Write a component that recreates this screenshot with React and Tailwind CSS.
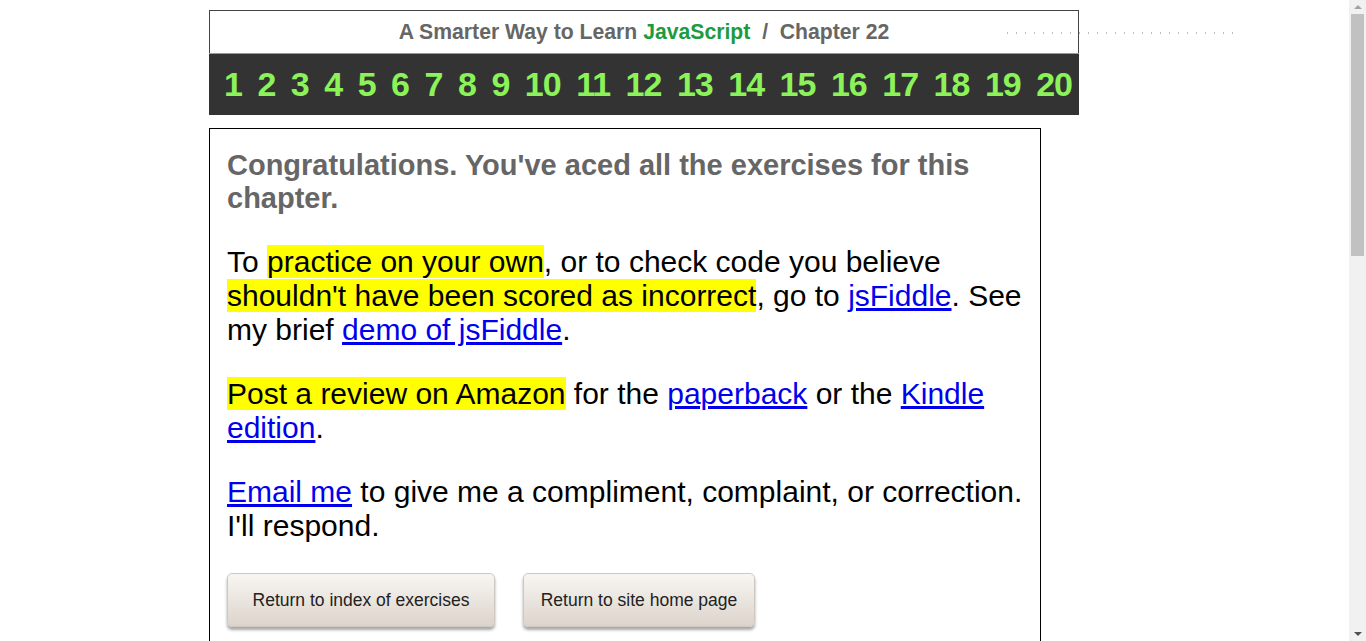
import React from "react";

// Chapter-complete page: banner with chapter numbers, then the congrats box

const chapters = Array.from({ length: 20 }, (_, i) => i + 1);

const Hl = ({ children }) => <span className="bg-[#ffff00]">{children}</span>;

const A = ({ children }) => (
  <a href="#" className="text-[#0000ee] underline">
    {children}
  </a>
);

const Btn = ({ children, w }) => (
  <button
    className={`${w} h-[54px] rounded-[5px] border border-[#cfc8c0] bg-gradient-to-b from-[#f8f6f3] to-[#dcd4cb] shadow-[0_3px_3px_rgba(0,0,0,0.35)] text-[17.5px] text-[#222] font-['Liberation_Sans',sans-serif]`}
  >
    {children}
  </button>
);

export default function App() {
  return (
    <div className="relative min-h-[800px] bg-white font-['Liberation_Sans',Arial,sans-serif]">
      {/* stray dotted rule next to the banner */}
      <svg className="absolute left-[1007px] top-[32px]" width="232" height="2">
        <line x1="0" y1="1" x2="232" y2="1" stroke="#777" strokeDasharray="1 8" />
      </svg>

      {/* window scrollbar */}
      <div className="fixed right-0 top-0 z-10 w-[17px] h-[641px] bg-[#f1f1f1] flex flex-col items-center">
        <div className="h-[14px] flex items-center justify-center">
          <div className="w-0 h-0 border-l-[4px] border-r-[4px] border-b-[4px] border-l-transparent border-r-transparent border-b-[#a3a3a3]" />
        </div>
        <div className="w-[13px] h-[242px] bg-[#c1c1c1]" />
        <div className="flex-1" />
        <div className="h-[14px] flex items-center justify-center">
          <div className="w-0 h-0 border-l-[4px] border-r-[4px] border-t-[4px] border-l-transparent border-r-transparent border-t-[#505050]" />
        </div>
      </div>

      <div className="pt-[10px] pl-[209px]">
        <div className="w-[870px]">
          <div className="h-[43px] border border-b-0 border-[#444] bg-white flex items-center justify-center text-[21.2px] font-bold text-[#666]">
            A Smarter Way to Learn&nbsp;<span className="text-[#1d9b3f]">JavaScript</span>&nbsp;&nbsp;/&nbsp; Chapter 22
          </div>
          <div className="h-[62px] bg-[#333] border-t border-[#999] flex items-center gap-[15.5px] pl-[15px] text-[34px] tracking-[-1px] font-bold text-[#8cf25a]">
            {chapters.map((n) => (
              <span key={n}>{n}</span>
            ))}
          </div>
        </div>

        <div className="mt-[13px] w-[832px] border border-black px-[17px] pt-[20px] pb-[40px] min-h-[600px]">
          <h1 className="text-[29px] leading-[33px] font-bold text-[#666]">
            Congratulations. You've aced all the exercises for this chapter.
          </h1>

          <p className="mt-[30px] text-[30px] leading-[34px] text-black">
            To <Hl>practice on your own</Hl>, or to check code you believe{" "}
            <Hl>shouldn't have been scored as incorrect</Hl>, go to <A>jsFiddle</A>. See my brief{" "}
            <A>demo of jsFiddle</A>.
          </p>

          <p className="mt-[30px] text-[30px] leading-[34px] text-black">
            <Hl>Post a review on Amazon</Hl> for the <A>paperback</A> or the <A>Kindle edition</A>.
          </p>

          <p className="mt-[30px] text-[30px] leading-[34px] text-black">
            <A>Email me</A> to give me a compliment, complaint, or correction. I'll respond.
          </p>

          <div className="mt-[30px] flex gap-[28px]">
            <Btn w="w-[268px]">Return to index of exercises</Btn>
            <Btn w="w-[232px]">Return to site home page</Btn>
          </div>
        </div>
      </div>
    </div>
  );
}
